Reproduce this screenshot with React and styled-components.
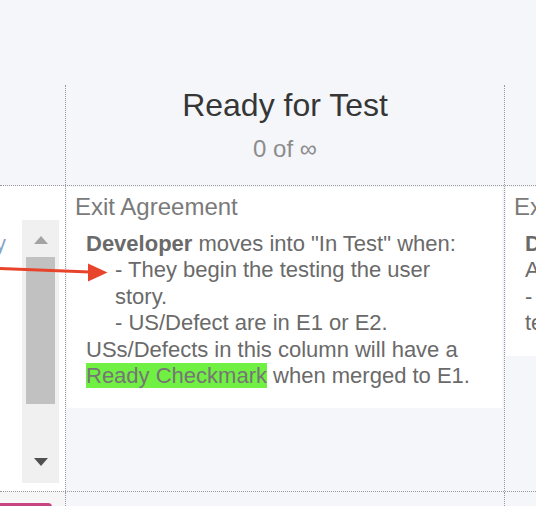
/// external modules ///
import React from 'react';
import styled, { createGlobalStyle } from 'styled-components';

/***************************************
  STYLES
***************************************/

const colors = {
  page: '#f5f6fa',
  line: '#9a9a9a',
  title: '#363636',
  count: '#8c8c8c',
  label: '#7a7a7a',
  body: '#6a6a6a',
  card: '#ffffff',
  mark: '#70f043',
  arrow: '#e8442b',
  track: '#f0f0f0',
  thumb: '#c1c1c1',
  pink: '#c9457f',
};

const GlobalStyle = createGlobalStyle `
  html, body {
    margin: 0;
    padding: 0;
    overflow: hidden;
    background: ${colors.page};
    font-family: "Liberation Sans", Arial, sans-serif;
  }
`;

const COLUMNS = '65px 439px 439px';

/***************************************
  COMPONENTS
***************************************/

const Board = styled.div `
  position: relative;
  width: 536px;
  height: 506px;
  overflow: hidden;
  padding-top: 85px;
  box-sizing: border-box;
`;

const Row = styled.div `
  display: grid;
  grid-template-columns: ${COLUMNS};
  box-sizing: border-box;
  height: ${(p) => p.height}px;
  border-bottom: ${(p) => (p.ruled ? `1px dotted ${colors.line}` : 'none')};
`;

const Cell = styled.div `
  box-sizing: border-box;
  min-width: 0;
  border-left: ${(p) => (p.divider ? `1px dotted ${colors.line}` : 'none')};
  background: ${(p) => p.tint || 'transparent'};
`;

const HeadCell = styled(Cell) `
  display: flex;
  flex-flow: column nowrap;
  align-items: center;
  padding-top: 2px;
`;

const Title = styled.h2 `
  margin: 0;
  font-size: 32px;
  font-weight: normal;
  line-height: normal;
  color: ${colors.title};
`;

const Count = styled.div `
  margin-top: 11px;
  font-size: 24px;
  line-height: normal;
  color: ${colors.count};
`;

const Card = styled.div `
  margin: 1px 2px 0 1px;
  padding: 6px 19px 19px 8px;
  background: ${colors.card};
`;

const CardLabel = styled.div `
  font-size: 24px;
  line-height: 28px;
  color: ${colors.label};
`;

const CardBody = styled.div `
  margin: 10px 0 0 11px;
  font-size: 22px;
  line-height: 26.4px;
  color: ${colors.body};

  & b {
    font-weight: bold;
  }
`;

const Indented = styled.div `
  padding-left: 29px;
`;

const Mark = styled.span `
  background: ${colors.mark};
  color: #767676;
`;

const LeftCard = styled.div `
  display: flex;
  align-items: flex-start;
  height: 100%;
  padding-top: 1px;
  box-sizing: border-box;
  background: ${colors.card};
`;

const TextClip = styled.div `
  display: flex;
  justify-content: flex-end;
  width: 6px;
  margin: 44px 16px 0 0;
  overflow: hidden;
  white-space: nowrap;
  font-size: 22px;
  line-height: 26.4px;
  color: #8ca5c9;
`;

const Track = styled.div `
  display: flex;
  flex-flow: column nowrap;
  align-items: center;
  width: 37px;
  height: 263px;
  margin-top: 33px;
  background: ${colors.track};
`;

const Step = styled.div `
  width: 0;
  height: 0;
  margin: ${(p) => (p.down ? '54px 0 0' : '16px 0 0')};
  border-left: 7.5px solid transparent;
  border-right: 7.5px solid transparent;
  border-bottom: ${(p) => (p.down ? 'none' : `8px solid #a3a3a3`)};
  border-top: ${(p) => (p.down ? `8px solid #505050` : 'none')};
`;

const Thumb = styled.div `
  width: 29px;
  height: 147px;
  margin-top: 13px;
  background: ${colors.thumb};
`;

const PinkCard = styled.div `
  width: 52px;
  height: 100%;
  margin-top: 11px;
  border-top: 3px solid ${colors.pink};
  border-top-right-radius: 4px;
  background: #fafafa;
`;

const Annotation = styled.svg `
  position: absolute;
  left: 0;
  top: 0;
  pointer-events: none;
`;

/***************************************
  MAIN
***************************************/

const Arrow = () => (
  <Annotation width="536" height="506" viewBox="0 0 536 506">
    <line x1="0" y1="268.5" x2="90" y2="272" stroke={colors.arrow} strokeWidth="3" />
    <polygon points="88,263.5 107.5,272.5 88,281.5" fill={colors.arrow} />
  </Annotation>
);

const App = () => (
  <Board>
    <GlobalStyle />

    <Row height={101} ruled>
      <HeadCell />
      <HeadCell divider>
        <Title>Ready for Test</Title>
        <Count>0 of ∞</Count>
      </HeadCell>
      <HeadCell divider />
    </Row>

    <Row height={306} ruled>
      <Cell>
        <LeftCard>
          <TextClip>Ready</TextClip>
          <Track>
            <Step />
            <Thumb />
            <Step down />
          </Track>
        </LeftCard>
      </Cell>

      <Cell divider>
        <Card>
          <CardLabel>Exit Agreement</CardLabel>
          <CardBody>
            <b>Developer</b> moves into "In Test" when:
            <Indented>- They begin the testing the user story.</Indented>
            <Indented>- US/Defect are in E1 or E2.</Indented>
            USs/Defects in this column will have a <Mark>Ready Checkmark</Mark> when merged to E1.
          </CardBody>
        </Card>
      </Cell>

      <Cell divider>
        <Card>
          <CardLabel>Exit Agreement</CardLabel>
          <CardBody>
            <b>Developer</b> moves into "Done" when:
            <br />
            All acceptance criteria have been met.
            <br />
            - US/Defect has passed all QA
            <br />
            testing in E1.
          </CardBody>
        </Card>
      </Cell>
    </Row>

    <Row height={14}>
      <Cell tint="#f6f6f6">
        <PinkCard />
      </Cell>
      <Cell divider />
      <Cell divider />
    </Row>

    <Arrow />
  </Board>
);

/**************************************/

export default App;
